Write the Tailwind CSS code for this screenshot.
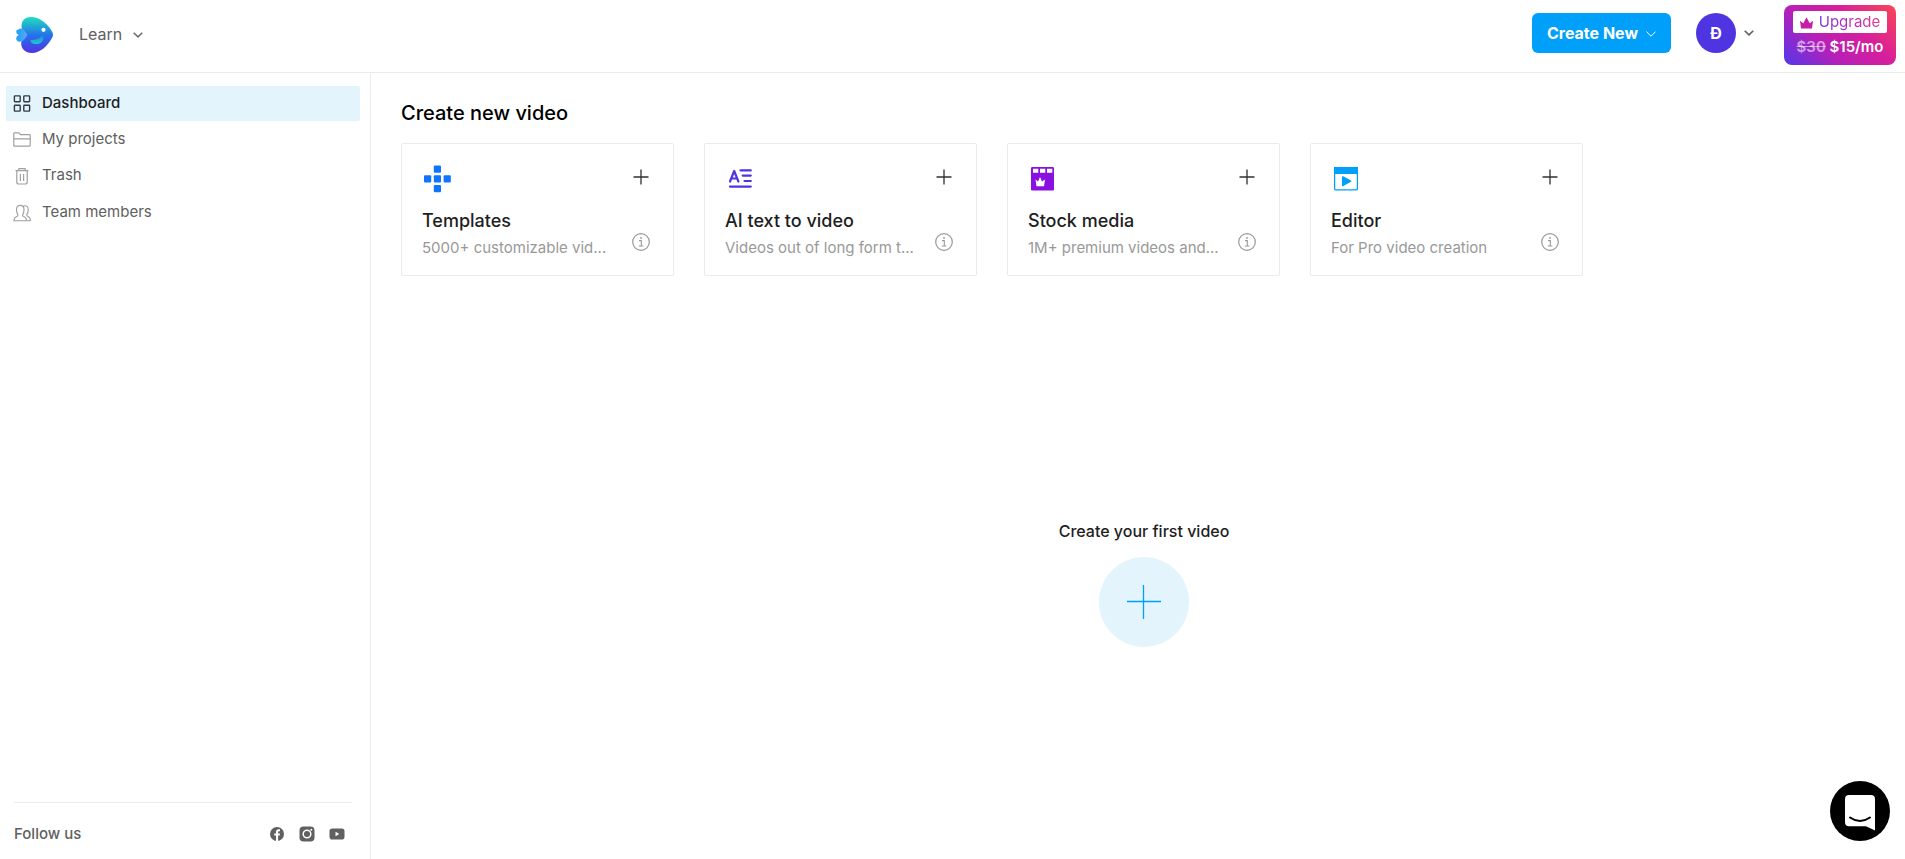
<!DOCTYPE html>
<html lang="en">
<head>
<meta charset="utf-8">
<meta name="viewport" content="width=device-width, initial-scale=1">
<title>Dashboard</title>
<script src="https://cdn.jsdelivr.net/npm/@tailwindcss/browser@4"></script>
</head>
<body class="flex min-h-screen flex-col bg-white font-['Inter',sans-serif] text-[#1e1e1e]">

<!-- Shared icons -->
<svg class="hidden" aria-hidden="true">
  <symbol id="plus" viewBox="0 0 16 16"><path d="M8 0.5v15M0.5 8h15" fill="none" stroke="currentColor" stroke-width="1.3"/></symbol>
  <symbol id="info" viewBox="0 0 18 18"><g fill="none" stroke="currentColor"><circle cx="9" cy="9" r="8.3" stroke-width="1.2"/><path d="M7 7.6h2.3v5.2M6.8 13h4.6" stroke-width="1.1"/></g><circle cx="9" cy="5" r="0.9" fill="currentColor"/></symbol>
</svg>

<header class="flex h-[73px] shrink-0 items-start border-b border-[#ebebeb] pl-4 pr-[9px]">
  <a href="#" aria-label="Home" class="mt-4">
    <svg class="h-[38px] w-[38px]" viewBox="0 0 38 38">
      <defs>
        <linearGradient id="fish" x1="0" y1="0" x2="0" y2="1"><stop offset="0" stop-color="#1fe0bd"/><stop offset=".5" stop-color="#2374ea"/><stop offset="1" stop-color="#5232e2"/></linearGradient>
        <linearGradient id="fin" x1="0" y1="0" x2="0" y2="1"><stop offset="0" stop-color="#2385e8"/><stop offset="1" stop-color="#20c9cd"/></linearGradient>
        <linearGradient id="tail" x1="0" y1="0" x2="1" y2="0"><stop offset="0" stop-color="#1aa0f5"/><stop offset="1" stop-color="#62a6f7"/></linearGradient>
      </defs>
      <path d="M6 13C4 5 9 0.500 16 1c9 .6 17 8 20.500 15.500q1.200 2.500 0 4.500C32 30 24 37 16 37 8 37 4 31 5.500 25Z" fill="url(#fish)"/>
      <path d="M5.500 12.500c2 .3 3.500 2.500 6 6.500-2.500 3.700-4 6-6 6.300C2.500 26.500.2 25 .2 22.300q0-2.100 2.600-3.200Q.2 17.900.2 15.700q0-2.200 2.300-2.200Q3.500 12 5.500 12.500Z" fill="url(#tail)"/>
      <path d="M14.500 24c4 .3 9-1 12.500-5 2 6-3 9.500-7.500 9-3 0-5-1.500-5-4Z" fill="url(#fin)"/>
      <circle cx="27.500" cy="13.800" r="2.100" fill="#fff"/>
    </svg>
  </a>
  <button type="button" class="ml-[25px] mt-[22px] flex items-center gap-[11px] text-base leading-6 text-[#606060]">Learn
    <svg class="mt-0.5 h-[6px] w-[10px]" viewBox="0 0 10 6" fill="none" stroke="#707070" stroke-width="1.6"><path d="M.7.7 5 4.900 9.300.7"/></svg>
  </button>

  <div class="ml-auto flex items-start">
    <button type="button" class="mt-[13px] flex h-10 items-center gap-2 rounded-md bg-[#009ff9] px-[15px] text-base font-bold text-white">Create New
      <svg class="mt-0.5 h-[6px] w-[10px]" viewBox="0 0 10 6" fill="none" stroke="currentColor"><path d="M.4.6 5 5.200 9.600.6"/></svg>
    </button>
    <button type="button" aria-label="Account" class="ml-[25px] mt-[13px] flex items-center gap-2">
      <span class="flex h-10 w-10 items-center justify-center rounded-full bg-[#4f35e1] text-base font-bold text-white">Đ</span>
      <svg class="h-[6px] w-[10px]" viewBox="0 0 10 6" fill="none" stroke="#606060" stroke-width="1.600"><path d="M.7.7 5 4.900 9.300.7"/></svg>
    </button>
    <a href="#" class="ml-[30px] mt-[5px] flex h-[60px] w-28 flex-col items-center rounded-lg bg-[linear-gradient(45deg,#5138ea_0%,#b71fb8_35%,#d81f9b_65%,#fa4653_100%)] pt-1.5 text-[15px] text-white">
      <span class="flex h-[22px] w-[94px] items-center justify-center gap-1.5 rounded-xs bg-white leading-5">
        <svg class="mt-px h-3 w-[13px]" viewBox="0 0 13 12" fill="#c41da8"><path d="M1 11.500 0 3.800l3.300 2.500L6.500.3l3.200 6L13 3.800l-1 7.700Z"/></svg>
        <span class="bg-[linear-gradient(45deg,#5e3be6_0%,#b62cc0_45%,#f0407a_100%)] bg-clip-text text-transparent">Upgrade</span>
      </span>
      <span class="mt-0.5 font-semibold leading-6"><s class="text-white/55">$30</s> $15/mo</span>
    </a>
  </div>
</header>

<div class="flex flex-1">
  <aside class="flex w-[371px] shrink-0 flex-col border-r border-[#ebebeb] pl-1.5 pr-2.5 pt-[13px]">
    <nav class="flex flex-col gap-px text-[15px] text-[#606060]">
      <a href="#" aria-current="page" class="flex h-[35px] items-center gap-[11px] rounded-xs bg-[#e3f4fd] px-[7px] font-medium text-[#1e1e1e]">
        <svg class="h-[18px] w-[18px]" viewBox="0 0 18 18" fill="none" stroke="#303b42" stroke-width="1.400"><rect x="1.400" y=".9" width="5.800" height="5.800" rx=".6"/><rect x="10.800" y=".9" width="5.800" height="5.800" rx=".6"/><rect x="1.400" y="10.300" width="5.800" height="5.800" rx=".6"/><rect x="10.800" y="10.300" width="5.800" height="5.800" rx=".6"/></svg>
        Dashboard</a>
      <a href="#" class="flex h-[35px] items-center gap-[11px] px-[7px]">
        <svg class="h-[18px] w-[18px]" viewBox="0 0 18 18" fill="none" stroke="#a0a0a0" stroke-width="1.200" stroke-linejoin="round"><path d="M.8 14.500V2.500q0-.7.7-.7h4.200q.5 0 .8.500l.9 1.300h9.100q.7 0 .7.700V14.500q0 .7-.7.700h-15Q.8 15.200.8 14.500ZM.8 7.800h16.400"/></svg>
        My projects</a>
      <a href="#" class="flex h-[35px] items-center gap-[11px] px-[7px]">
        <svg class="h-[18px] w-[18px]" viewBox="0 0 18 18" fill="none" stroke="#a0a0a0" stroke-width="1.200"><path d="M3.800 3.800V15q0 2 2 2h6.400q2 0 2-2V3.800M2.500 3.600h13M5.500 3.500 6 1.600h6l.5 1.900M7.400 7v7M10.600 7v7"/></svg>
        Trash</a>
      <a href="#" class="flex h-[37px] items-center gap-[11px] px-[7px]">
        <svg class="h-[18px] w-[18px]" viewBox="0 0 18 18" fill="none" stroke="#a0a0a0" stroke-width="1.150" stroke-linejoin="round"><path d="M1 16.700c0-2.500.3-3.200 2-3.700 1.500-.5 2-.7 2-2C4 9.800 3.500 8 3.500 5.600 3.500 2.800 5 1.400 7.200 1.400S11 2.800 11 5.600c0 2.400-.5 4.200-1.500 5.400 0 1.300.5 1.500 2 2 1.700.5 2 1.200 2 3.700ZM10 2.500c.6-.6 1.200-.8 2-.8 2 0 3.200 1.400 3.200 4 0 2.300-.5 3.800-1.500 5 0 1.200.5 1.600 1.700 2 1.500.5 1.900 1.400 1.900 4h-3.800"/></svg>
        Team members</a>
    </nav>
    <footer class="ml-2 mr-2 mt-auto flex h-[57px] items-center border-t border-[#ebebeb] pt-1.5 text-[15px] font-medium text-[#606060]">
      <span>Follow us</span>
      <div class="ml-auto mr-[7px] flex items-center gap-3.5">
        <a href="#" aria-label="Facebook"><svg class="h-4 w-4" viewBox="0 0 16 16"><circle cx="8" cy="8" r="7" fill="#606060"/><path d="M7 15V9.500H5.200V7.400H7V6c0-1.900 1-2.800 2.600-2.800l1.400.1v1.900h-.9c-.8 0-1 .4-1 1v1.200H11l-.3 2.100H9.100V15Z" fill="#fff"/></svg></a>
        <a href="#" aria-label="Instagram"><svg class="h-4 w-4" viewBox="0 0 16 16"><rect x=".5" y=".5" width="15" height="15" rx="4" fill="#606060"/><circle cx="8" cy="8" r="3.800" fill="none" stroke="#fff" stroke-width="1.500"/><circle cx="12.300" cy="3.700" r="1" fill="#fff"/></svg></a>
        <a href="#" aria-label="YouTube"><svg class="h-4 w-4" viewBox="0 0 16 16"><rect x=".5" y="2.500" width="15" height="11" rx="2.800" fill="#606060"/><path d="M6.500 5.800v4.400L10.300 8Z" fill="#fff"/></svg></a>
      </div>
    </footer>
  </aside>

  <main class="flex flex-1 flex-col pl-[30px] pr-[18px] pt-[26px]">
    <h1 class="text-xl font-medium leading-7 text-black">Create new video</h1>
    <div class="mt-4 grid grid-cols-[repeat(auto-fill,273px)] gap-[30px]">
      <section class="flex h-[133px] justify-between rounded-xs border border-[#ebebeb] pl-5 pr-[23px]">
        <div class="pt-[21px]">
          <svg class="ml-0.5 h-7 w-7" viewBox="0 0 28 28" fill="#0f75ff"><rect x="9.800" y=".5" width="7.200" height="7.200" rx="1"/><rect x="0" y="10.300" width="7.200" height="7.200" rx="1"/><rect x="9.800" y="10.300" width="7.200" height="7.200" rx="1"/><rect x="19.600" y="10.300" width="7.200" height="7.200" rx="1"/><rect x="9.800" y="20" width="7.200" height="7.200" rx="1"/></svg>
          <h2 class="mt-4 text-lg font-medium leading-6">Templates</h2>
          <p class="mt-[3px] whitespace-nowrap text-[15px] leading-6 text-[#999]">5000+ customizable vid...</p>
        </div>
        <div class="flex flex-col items-center pt-[25px]">
          <button type="button" aria-label="Add template"><svg class="h-4 w-4 text-[#303030]"><use href="#plus"/></svg></button>
          <button type="button" aria-label="About templates" class="mt-12"><svg class="h-[18px] w-[18px] text-[#999]"><use href="#info"/></svg></button>
        </div>
      </section>
      <section class="flex h-[133px] justify-between rounded-xs border border-[#ebebeb] pl-5 pr-[23px]">
        <div class="pt-[21px]">
          <svg class="ml-0.5 h-7 w-7" viewBox="0 0 28 28" fill="none" stroke="#4f35e1" stroke-width="2.200" stroke-linecap="round" stroke-linejoin="round"><path d="M3 16.500 7.200 6 11.400 16.500M4.400 13.500h5.600M13.500 5.300h10.300M15.700 10.600h8.100M17.500 16h6.300M3 21.600h20.800"/></svg>
          <h2 class="mt-4 text-lg font-medium leading-6">AI text to video</h2>
          <p class="mt-[3px] whitespace-nowrap text-[15px] leading-6 text-[#999]">Videos out of long form t...</p>
        </div>
        <div class="flex flex-col items-center pt-[25px]">
          <button type="button" aria-label="Add AI video"><svg class="h-4 w-4 text-[#303030]"><use href="#plus"/></svg></button>
          <button type="button" aria-label="About AI text to video" class="mt-12"><svg class="h-[18px] w-[18px] text-[#999]"><use href="#info"/></svg></button>
        </div>
      </section>
      <section class="flex h-[133px] justify-between rounded-xs border border-[#ebebeb] pl-5 pr-[23px]">
        <div class="pt-[21px]">
          <svg class="ml-0.5 h-7 w-7" viewBox="0 0 28 28"><rect x="1" y="2" width="23" height="23.500" rx="1.200" fill="#8a10df"/><path d="M3 3.800h5.300v4H3ZM10 3.800h5.300v4H10ZM17 3.800h5.300v4H17ZM6.500 21.300 5.500 14.500l2.500 2 2-4.500 2 4.500 3-2-1 6.800Z" fill="#fff"/></svg>
          <h2 class="mt-4 text-lg font-medium leading-6">Stock media</h2>
          <p class="mt-[3px] whitespace-nowrap text-[15px] leading-6 text-[#999]">1M+ premium videos and...</p>
        </div>
        <div class="flex flex-col items-center pt-[25px]">
          <button type="button" aria-label="Add stock media"><svg class="h-4 w-4 text-[#303030]"><use href="#plus"/></svg></button>
          <button type="button" aria-label="About stock media" class="mt-12"><svg class="h-[18px] w-[18px] text-[#999]"><use href="#info"/></svg></button>
        </div>
      </section>
      <section class="flex h-[133px] justify-between rounded-xs border border-[#ebebeb] pl-5 pr-[23px]">
        <div class="pt-[21px]">
          <svg class="ml-0.5 h-7 w-7" viewBox="0 0 28 28"><rect x="1.600" y="2.600" width="22.800" height="22.300" rx=".8" fill="#fff" stroke="#009ff9" stroke-width="1.300"/><path d="M1 2h24v7H1ZM9 12.500v7.800q0 1.600 1.300.8l7.700-4.300q1-.7 0-1.400l-7.700-4.100Q9 10.700 9 12.500Z" fill="#009ff9"/></svg>
          <h2 class="mt-4 text-lg font-medium leading-6">Editor</h2>
          <p class="mt-[3px] whitespace-nowrap text-[15px] leading-6 text-[#999]">For Pro video creation</p>
        </div>
        <div class="flex flex-col items-center pt-[25px]">
          <button type="button" aria-label="Open editor"><svg class="h-4 w-4 text-[#303030]"><use href="#plus"/></svg></button>
          <button type="button" aria-label="About the editor" class="mt-12"><svg class="h-[18px] w-[18px] text-[#999]"><use href="#info"/></svg></button>
        </div>
      </section>
    </div>

    <div class="flex flex-1 flex-col items-center justify-center pt-[30px]">
      <h2 class="text-base font-medium leading-6">Create your first video</h2>
      <button type="button" aria-label="Create your first video" class="mt-3.5 flex h-[90px] w-[90px] items-center justify-center rounded-full bg-[#e3f4fd]">
        <svg class="h-[34px] w-[34px]" viewBox="0 0 34 34" fill="none" stroke="#009ff9" stroke-width="1.300"><path d="M16.500 0v34M0 16.500h34"/></svg>
      </button>
    </div>
  </main>
</div>

<button type="button" aria-label="Open chat" class="fixed bottom-[18px] right-[15px] flex h-[60px] w-[60px] items-center justify-center rounded-full bg-black">
  <svg class="mt-1 h-9 w-[30px]" viewBox="0 0 30 36"><path d="M4 0h22q4 0 4 4v31.500L21 31.200H4q-4 0-4-4V4q0-4 4-4Z" fill="#fff"/><path d="M5 22.500q10 7 20 0" fill="none" stroke="#000" stroke-width="2" stroke-linecap="round"/></svg>
</button>
</body>
</html>
